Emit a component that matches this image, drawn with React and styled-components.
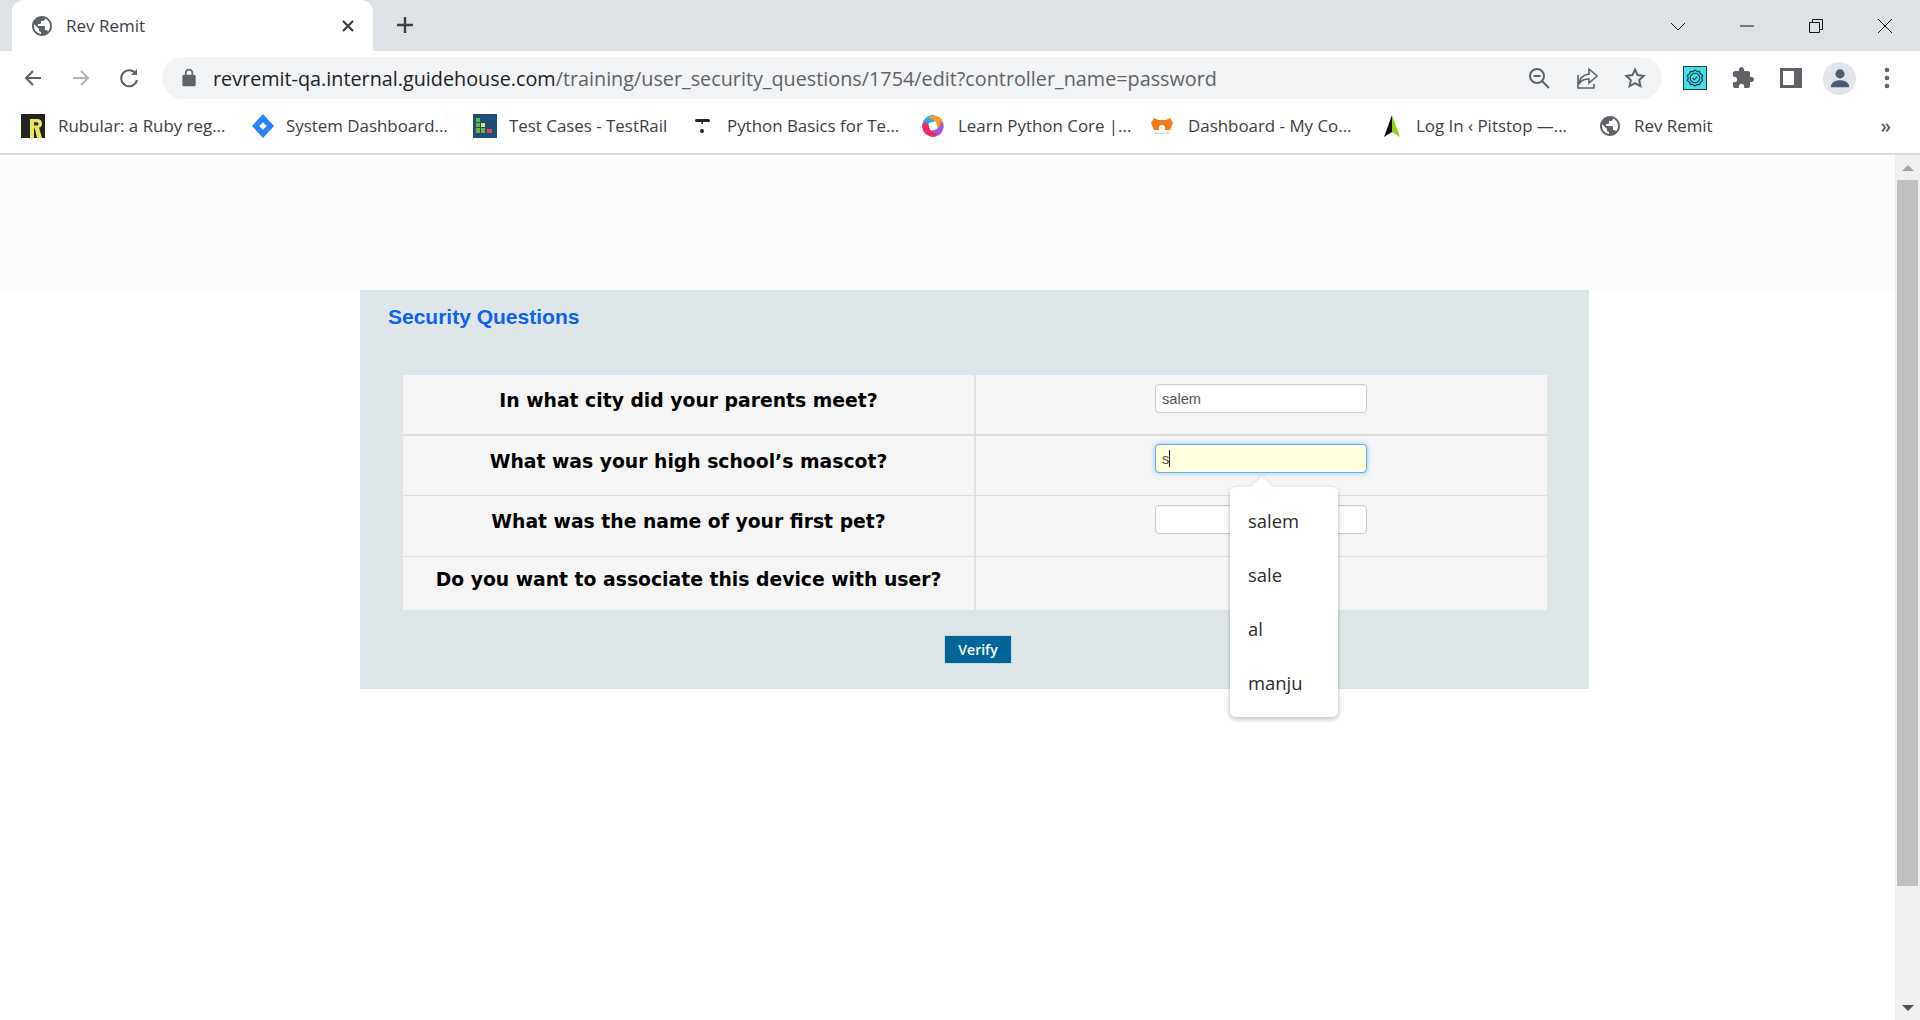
import React from "react";
import styled, { createGlobalStyle } from "styled-components";

const GlobalStyle = createGlobalStyle`
  html, body {
    margin: 0;
    padding: 0;
    height: 100%;
    overflow: hidden;
    background: #fff;
  }
`;

const uiFont = `"Open Sans", "Noto Sans", sans-serif`;

const GLOBE =
  "M12 2C6.48 2 2 6.48 2 12s4.48 10 10 10 10-4.48 10-10S17.52 2 12 2zm-1 17.93c-3.95-.49-7-3.85-7-7.93 0-.62.08-1.21.21-1.79L9 15v1c0 1.1.9 2 2 2v1.93zm6.9-2.54c-.26-.81-1-1.39-1.9-1.39h-1v-3c0-.55-.45-1-1-1H8v-2h2c.55 0 1-.45 1-1V7h2c1.1 0 2-.9 2-2v-.41c2.93 1.19 5 4.06 5 7.41 0 2.08-.8 3.97-2.1 5.39z";
const PUZZLE =
  "M20.5 11H19V7c0-1.1-.9-2-2-2h-4V3.5C13 2.12 11.88 1 10.5 1S8 2.12 8 3.5V5H4c-1.1 0-1.99.9-1.99 2v3.8H3.5c1.49 0 2.7 1.21 2.7 2.7s-1.21 2.7-2.7 2.7H2V20c0 1.1.9 2 2 2h3.8v-1.5c0-1.49 1.21-2.7 2.7-2.7 1.49 0 2.7 1.21 2.7 2.7V22H17c1.1 0 2-.9 2-2v-4h1.5c1.38 0 2.5-1.12 2.5-2.5S21.88 11 20.5 11z";
const PETAL = "M13.5 1.2C7 .4 1.6 5 1.6 11.2c0 2.6 1.1 4.4 3.2 5.4-.6-4.4 2.2-8.2 7.6-8.8 2-.2 3-1.2 3-3.2 0-1.7-.6-3-1.9-3.4z";

const Shell = styled.div`
  width: 1920px;
  height: 1020px;
  display: flex;
  flex-direction: column;
  overflow: hidden;
`;

/* ---- tab strip ---- */
const TabStrip = styled.div`
  height: 51px;
  flex: none;
  display: flex;
  align-items: flex-end;
  background: #dee1e6;
  padding-left: 12px;
`;

const Tab = styled.div`
  width: 361px;
  height: 51px;
  box-sizing: border-box;
  display: flex;
  align-items: center;
  padding: 0 18px 0 18px;
  background: #fff;
  border-radius: 12px 12px 0 0;
  font: 17px ${uiFont};
  color: #3c4043;
`;

const TabTitle = styled.span`
  margin-left: 12px;
  flex: 1;
`;

const NewTab = styled.div`
  width: 24px;
  height: 24px;
  margin: 0 0 14px 20px;
  color: #3c4043;
`;

const WindowControls = styled.div`
  margin-left: auto;
  height: 51px;
  display: flex;
  align-items: center;
  padding-right: 27px;
  gap: 53px;
`;

const WinIcon = styled.svg`
  width: 16px;
  height: 16px;
  flex: none;
  fill: none;
  stroke: #111;
  stroke-width: 1;
`;

/* ---- address bar ---- */
const Toolbar = styled.div`
  height: 51px;
  flex: none;
  box-sizing: border-box;
  display: flex;
  align-items: center;
  background: #fff;
  padding: 3px 21px 0 21px;
`;

const NavIcon = styled.svg`
  width: 24px;
  height: 24px;
  flex: none;
  margin-right: ${(p) => p.$gap || 0}px;
  fill: none;
  stroke: ${(p) => p.$color || "#5f6368"};
  stroke-width: ${(p) => p.$stroke || 2};
`;

const Omnibox = styled.div`
  width: 1500px;
  height: 42px;
  box-sizing: border-box;
  display: flex;
  align-items: center;
  padding: 0 15px 0 17px;
  background: #f1f3f4;
  border-radius: 21px;
  font: 19.8px ${uiFont};
  color: #5f6368;
`;

const UrlText = styled.div`
  margin-left: 14px;
  flex: 1;
  white-space: nowrap;
  b {
    font-weight: 400;
    color: #202124;
  }
`;

const ToolIcon = styled.svg`
  width: ${(p) => p.$size || 24}px;
  height: ${(p) => p.$size || 24}px;
  flex: none;
  margin-left: ${(p) => p.$left || 0}px;
  fill: ${(p) => p.$fill || "#5f6368"};
`;

const BadgeIcon = styled.svg`
  width: 24px;
  height: 24px;
  flex: none;
  margin-left: 21px;
`;

const Avatar = styled.div`
  width: 33px;
  height: 33px;
  flex: none;
  margin-left: 20px;
  border-radius: 50%;
  background: #e3e5ea;
  display: flex;
  align-items: center;
  justify-content: center;
`;

/* ---- bookmarks ---- */
const BookmarkBar = styled.div`
  height: 51px;
  flex: none;
  box-sizing: border-box;
  display: flex;
  align-items: center;
  padding: 0 0 4px 21px;
  background: #fff;
`;

const Bookmark = styled.div`
  display: flex;
  align-items: center;
  width: ${(p) => p.$w}px;
  flex: none;
  font: 16.9px ${uiFont};
  color: #3c4043;
  white-space: nowrap;
  span {
    margin-left: ${(p) => p.$text || 12}px;
    margin-bottom: 1px;
  }
`;

const BookmarkIcon = styled.svg`
  width: 24px;
  height: 24px;
  flex: none;
`;

const MoreBookmarks = styled.div`
  margin-left: auto;
  margin-right: 29px;
  font: 600 19px ${uiFont};
  color: #5f6368;
`;

const ChromeRule = styled.div`
  height: 2px;
  flex: none;
  background: #dadce0;
`;

/* ---- viewport ---- */
const Viewport = styled.div`
  flex: 1;
  display: flex;
  min-height: 0;
`;

const Page = styled.div`
  flex: 1;
  display: flex;
  flex-direction: column;
`;

const HeaderBand = styled.div`
  height: 135px;
  flex: none;
  background: #fcfcfc;
`;

const Panel = styled.div`
  width: 1229px;
  height: 399px;
  margin-left: 360px;
  box-sizing: border-box;
  padding: 14px 41px 0 42px;
  background: #dfe6e9;
  position: relative;
`;

const PanelTitle = styled.h2`
  margin: 0 0 0 -14px;
  height: 70px;
  font: bold 21px "Liberation Sans", Arial, sans-serif;
  line-height: 26px;
  color: #0d62f2;
`;

const QuestionTable = styled.div`
  display: grid;
  grid-template-columns: 571px 1fr;
  background: #f5f5f5;
  border: 1px solid #e4e4e4;
`;

const QuestionCell = styled.div`
  height: ${(p) => p.$h}px;
  box-sizing: border-box;
  padding-top: ${(p) => p.$top}px;
  text-align: center;
  font: bold 18.8px "DejaVu Sans", Verdana, sans-serif;
  line-height: 24px;
  color: #000;
  border-top: ${(p) => p.$rule || 0}px solid #dedede;
`;

const AnswerCell = styled.div`
  height: ${(p) => p.$h}px;
  box-sizing: border-box;
  padding: ${(p) => p.$top}px 1px 0 0;
  display: flex;
  justify-content: center;
  border-top: ${(p) => p.$rule || 0}px solid #dedede;
  border-left: 2px solid #e0e0e0;
`;

const AnswerInput = styled.div`
  width: 212px;
  height: 29px;
  box-sizing: border-box;
  padding-left: 6px;
  display: flex;
  align-items: center;
  background: ${(p) => (p.$focus ? "#ffffdd" : "#fff")};
  border: 1px solid ${(p) => (p.$focus ? "#66afe9" : "#cccccc")};
  border-radius: 4px;
  box-shadow: ${(p) =>
    p.$focus ? "0 0 5px rgba(102, 175, 233, 0.7)" : "inset 0 1px 1px rgba(0,0,0,0.04)"};
  font: 14.6px "Liberation Sans", Arial, sans-serif;
  color: #555;
`;

const Caret = styled.i`
  width: 1px;
  height: 17px;
  background: #222;
`;

const VerifyRow = styled.div`
  display: flex;
  margin: 24px 0 0 542px;
`;

const VerifyButton = styled.button`
  width: 68px;
  height: 29px;
  padding: 0;
  border: 1px solid #c8d8df;
  background: #006699;
  color: #fff;
  font: 600 14px "Open Sans", sans-serif;
`;

const Suggestions = styled.ul`
  position: absolute;
  top: 197px;
  left: 870px;
  width: 108px;
  height: 230px;
  box-sizing: border-box;
  margin: 0;
  padding: 7px 0 0;
  list-style: none;
  background: #fff;
  border-radius: 6px;
  box-shadow: 0 2px 5px rgba(0, 0, 0, 0.28);
  font: 18.4px ${uiFont};
  color: #2b2b2b;

  &::before {
    content: "";
    position: absolute;
    top: -8px;
    left: 24px;
    width: 16px;
    height: 16px;
    background: #fff;
    transform: rotate(45deg);
    box-shadow: -1px -1px 2px rgba(0, 0, 0, 0.08);
  }
`;

const SuggestionItem = styled.li`
  position: relative;
  height: 54px;
  line-height: 54px;
  padding-left: 18px;
`;

/* ---- scrollbar ---- */
const ScrollTrack = styled.div`
  width: 25px;
  flex: none;
  box-sizing: border-box;
  display: flex;
  flex-direction: column;
  align-items: center;
  background: #f0f0f0;
`;

const ScrollArrow = styled.div`
  width: 0;
  height: 0;
  flex: none;
  border-left: 6px solid transparent;
  border-right: 6px solid transparent;
  margin-top: ${(p) => p.$top}px;
  ${(p) =>
    p.$down
      ? "border-top: 6px solid #505050;"
      : "border-bottom: 6px solid #a3a3a3;"}
`;

const ScrollThumb = styled.div`
  width: 21px;
  height: 706px;
  flex: none;
  margin-top: 9px;
  background: #c0c0c0;
`;

const Globe = ({ size = 24, left }) => (
  <ToolIcon viewBox="0 0 24 24" $size={size} $left={left}>
    <path d={GLOBE} />
  </ToolIcon>
);

const questions = [
  { text: "In what city did your parents meet?", h: 59, top: 14, inputTop: 9, value: "salem" },
  { text: "What was your high school’s mascot?", h: 61, top: 14, inputTop: 8, rule: 2, focus: true },
  { text: "What was the name of your first pet?", h: 61, top: 14, inputTop: 9, rule: 1 },
  { text: "Do you want to associate this device with user?", h: 54, top: 11, rule: 1, noInput: true },
];

const suggestions = ["salem", "sale", "al", "manju"];

export default function App() {
  return (
    <Shell>
      <GlobalStyle />
      <TabStrip>
        <Tab>
          <Globe />
          <TabTitle>Rev Remit</TabTitle>
          <svg width="14" height="14" viewBox="0 0 14 14" fill="none" stroke="#3c4043" strokeWidth="2.2">
            <path d="M2 2l10 10M12 2L2 12" />
          </svg>
        </Tab>
        <NewTab>
          <svg width="24" height="24" viewBox="0 0 24 24" fill="none" stroke="currentColor" strokeWidth="2.4">
            <path d="M12 4v16M4 12h16" />
          </svg>
        </NewTab>
        <WindowControls>
          <WinIcon viewBox="0 0 16 16">
            <path d="M1 5l7 7 7-7" />
          </WinIcon>
          <WinIcon viewBox="0 0 16 16">
            <path d="M1 8h14" />
          </WinIcon>
          <WinIcon viewBox="0 0 16 16">
            <path d="M1.5 4.5h10v10h-10zM4.5 4.5v-3h10v10h-3" />
          </WinIcon>
          <WinIcon viewBox="0 0 16 16">
            <path d="M1 1l14 14M15 1L1 15" />
          </WinIcon>
        </WindowControls>
      </TabStrip>

      <Toolbar>
        <NavIcon viewBox="0 0 24 24" $gap={24}>
          <path d="M20 12H5M12 5l-7 7 7 7" />
        </NavIcon>
        <NavIcon viewBox="0 0 24 24" $gap={24} $color="#b1b3b6">
          <path d="M4 12h15M12 5l7 7-7 7" />
        </NavIcon>
        <NavIcon viewBox="0 0 24 24" $gap={21}>
          <path d="M19 8a8 8 0 1 0 1 6" />
          <path d="M20 3v6h-6" fill="#5f6368" stroke="none" />
        </NavIcon>
        <Omnibox>
          <ToolIcon viewBox="0 0 24 24" $size={20}>
            <path d="M18 8h-1V6a5 5 0 0 0-10 0v2H6a2 2 0 0 0-2 2v10a2 2 0 0 0 2 2h12a2 2 0 0 0 2-2V10a2 2 0 0 0-2-2zM9 8V6a3 3 0 0 1 6 0v2H9z" />
          </ToolIcon>
          <UrlText>
            <b>revremit-qa.internal.guidehouse.com</b>/training/user_security_questions/1754/edit?controller_name=password
          </UrlText>
          <NavIcon viewBox="0 0 24 24" $gap={24}>
            <circle cx="10" cy="10" r="7" />
            <path d="M6.5 10h7M15 15l7 7" />
          </NavIcon>
          <NavIcon viewBox="0 0 24 24" $gap={24} $stroke={1.6}>
            <path d="M14 3l8 7-8 7v-4c-5 0-8 1.5-10 5 .5-5.5 3.5-9 10-10zM3 9v13h16v-4" />
          </NavIcon>
          <NavIcon viewBox="0 0 24 24">
            <path d="M12 3.5l2.6 5.6 6.1.8-4.5 4.2 1.2 6.1-5.4-3-5.4 3 1.2-6.1-4.5-4.2 6.1-.8z" />
          </NavIcon>
        </Omnibox>
        <BadgeIcon viewBox="0 0 24 24">
          <rect x="0.5" y="0.5" width="23" height="23" fill="#45dfe8" stroke="#1c3f52" />
          <path d="M12 4l2 1.6 2.6-.2.8 2.4 2.2 1.4-.8 2.8.8 2.8-2.2 1.4-.8 2.4-2.6-.2L12 20l-2-1.6-2.6.2-.8-2.4-2.2-1.4.8-2.8-.8-2.8 2.2-1.4.8-2.4 2.6.2z" fill="none" stroke="#1c3f52" strokeWidth="1.3" />
          <circle cx="12" cy="12" r="4.8" fill="none" stroke="#1c3f52" strokeWidth="1.1" />
          <path d="M9.8 12l1.6 1.6 2.8-3" fill="none" stroke="#1c3f52" strokeWidth="1.3" />
        </BadgeIcon>
        <ToolIcon viewBox="0 0 24 24" $left={24}>
          <path d={PUZZLE} />
        </ToolIcon>
        <ToolIcon viewBox="0 0 24 24" $left={24}>
          <path fillRule="evenodd" d="M1 2h22v20H1zM4 5v14h11V5z" />
        </ToolIcon>
        <Avatar>
          <svg width="22" height="22" viewBox="0 0 24 24" fill="#4f5b70">
            <circle cx="12" cy="7.5" r="5" />
            <path d="M2 22c0-5 4.5-7.5 10-7.5S22 17 22 22z" />
          </svg>
        </Avatar>
        <ToolIcon viewBox="0 0 24 24" $left={19}>
          <circle cx="12" cy="4" r="2.3" />
          <circle cx="12" cy="12" r="2.3" />
          <circle cx="12" cy="20" r="2.3" />
        </ToolIcon>
      </Toolbar>

      <BookmarkBar>
        <Bookmark $w={230} $text={13}>
          <BookmarkIcon viewBox="0 0 24 24">
            <rect width="24" height="24" fill="#22221f" />
            <path d="M9 5h7.5a4.5 4.5 0 0 1 1.6 8.7L21 24h-5l-2.2-9.5H13V24H9zM13 8.2v3.4h2.8a1.7 1.7 0 0 0 0-3.4z" fill="#e8e65a" />
          </BookmarkIcon>
          <span>Rubular: a Ruby reg...</span>
        </Bookmark>
        <Bookmark $w={222} $text={11}>
          <BookmarkIcon viewBox="0 0 24 24">
            <path d="M12 0l11 12-11 12L1 12z" fill="#2684ff" />
            <path d="M12 8.2l3.8 3.8-3.8 3.8L8.2 12z" fill="#fff" />
          </BookmarkIcon>
          <span>System Dashboard...</span>
        </Bookmark>
        <Bookmark $w={217} $text={12}>
          <BookmarkIcon viewBox="0 0 24 24">
            <rect width="24" height="24" fill="#1f4e79" />
            <rect x="3" y="4" width="4" height="4" fill="#6cb33f" />
            <rect x="3" y="9" width="4" height="4" fill="#6cb33f" />
            <rect x="8" y="9" width="4" height="4" fill="#f2e24a" />
            <rect x="3" y="14" width="4" height="5" fill="#6cb33f" />
            <rect x="8" y="14" width="4" height="5" fill="#6cb33f" />
            <rect x="14" y="15" width="5" height="4" fill="#e24b4b" />
          </BookmarkIcon>
          <span>Test Cases - TestRail</span>
        </Bookmark>
        <Bookmark $w={231} $text={13}>
          <BookmarkIcon viewBox="0 0 24 24">
            <rect x="5" y="5" width="15" height="3" rx="1.5" fill="#20242c" />
            <rect x="11.5" y="8" width="1.5" height="2" fill="#20242c" />
            <circle cx="12" cy="17" r="2" fill="#20242c" />
          </BookmarkIcon>
          <span>Python Basics for Te...</span>
        </Bookmark>
        <Bookmark $w={229} $text={13}>
          <BookmarkIcon viewBox="0 0 24 24">
            <path d={PETAL} fill="#27a7f0" />
            <path d={PETAL} fill="#f59f2b" transform="rotate(90 12 12)" />
            <path d={PETAL} fill="#9b59e6" transform="rotate(180 12 12)" />
            <path d={PETAL} fill="#ee2a5f" transform="rotate(270 12 12)" />
          </BookmarkIcon>
          <span>Learn Python Core |...</span>
        </Bookmark>
        <Bookmark $w={230} $text={14}>
          <BookmarkIcon viewBox="0 0 24 24">
            <path d="M1 9l3-5 4 2h8l4-2 3 5-3 7h-5v-2a3 3 0 0 0-6 0v2H4z" fill="#f27a1a" />
            <rect x="4" y="18.5" width="16" height="1.5" fill="#dcdcdc" />
          </BookmarkIcon>
          <span>Dashboard - My Co...</span>
        </Bookmark>
        <Bookmark $w={218} $text={12}>
          <BookmarkIcon viewBox="0 0 24 24">
            <path d="M12 1L4 23l8-5z" fill="#111" />
            <path d="M12 1l8 22-8-5z" fill="#8fd014" />
          </BookmarkIcon>
          <span>Log In ‹ Pitstop —...</span>
        </Bookmark>
        <Bookmark $w={120} $text={12}>
          <BookmarkIcon viewBox="0 0 24 24" fill="#5f6368">
            <path d={GLOBE} />
          </BookmarkIcon>
          <span>Rev Remit</span>
        </Bookmark>
        <MoreBookmarks>»</MoreBookmarks>
      </BookmarkBar>
      <ChromeRule />

      <Viewport>
        <Page>
          <HeaderBand />
          <Panel>
            <PanelTitle>Security Questions</PanelTitle>
            <QuestionTable>
              {questions.map((q) => (
                <React.Fragment key={q.text}>
                  <QuestionCell $h={q.h} $top={q.top} $rule={q.rule}>
                    {q.text}
                  </QuestionCell>
                  <AnswerCell $h={q.h} $top={q.inputTop} $rule={q.rule}>
                    {!q.noInput && (
                      <AnswerInput $focus={q.focus}>
                        {q.value}
                        {q.focus && (
                          <>
                            s<Caret />
                          </>
                        )}
                      </AnswerInput>
                    )}
                  </AnswerCell>
                </React.Fragment>
              ))}
            </QuestionTable>
            <VerifyRow>
              <VerifyButton>Verify</VerifyButton>
            </VerifyRow>
            <Suggestions>
              {suggestions.map((s) => (
                <SuggestionItem key={s}>{s}</SuggestionItem>
              ))}
            </Suggestions>
          </Panel>
        </Page>
        <ScrollTrack>
          <ScrollArrow $top={10} />
          <ScrollThumb />
          <ScrollArrow $down $top={119} />
        </ScrollTrack>
      </Viewport>
    </Shell>
  );
}
